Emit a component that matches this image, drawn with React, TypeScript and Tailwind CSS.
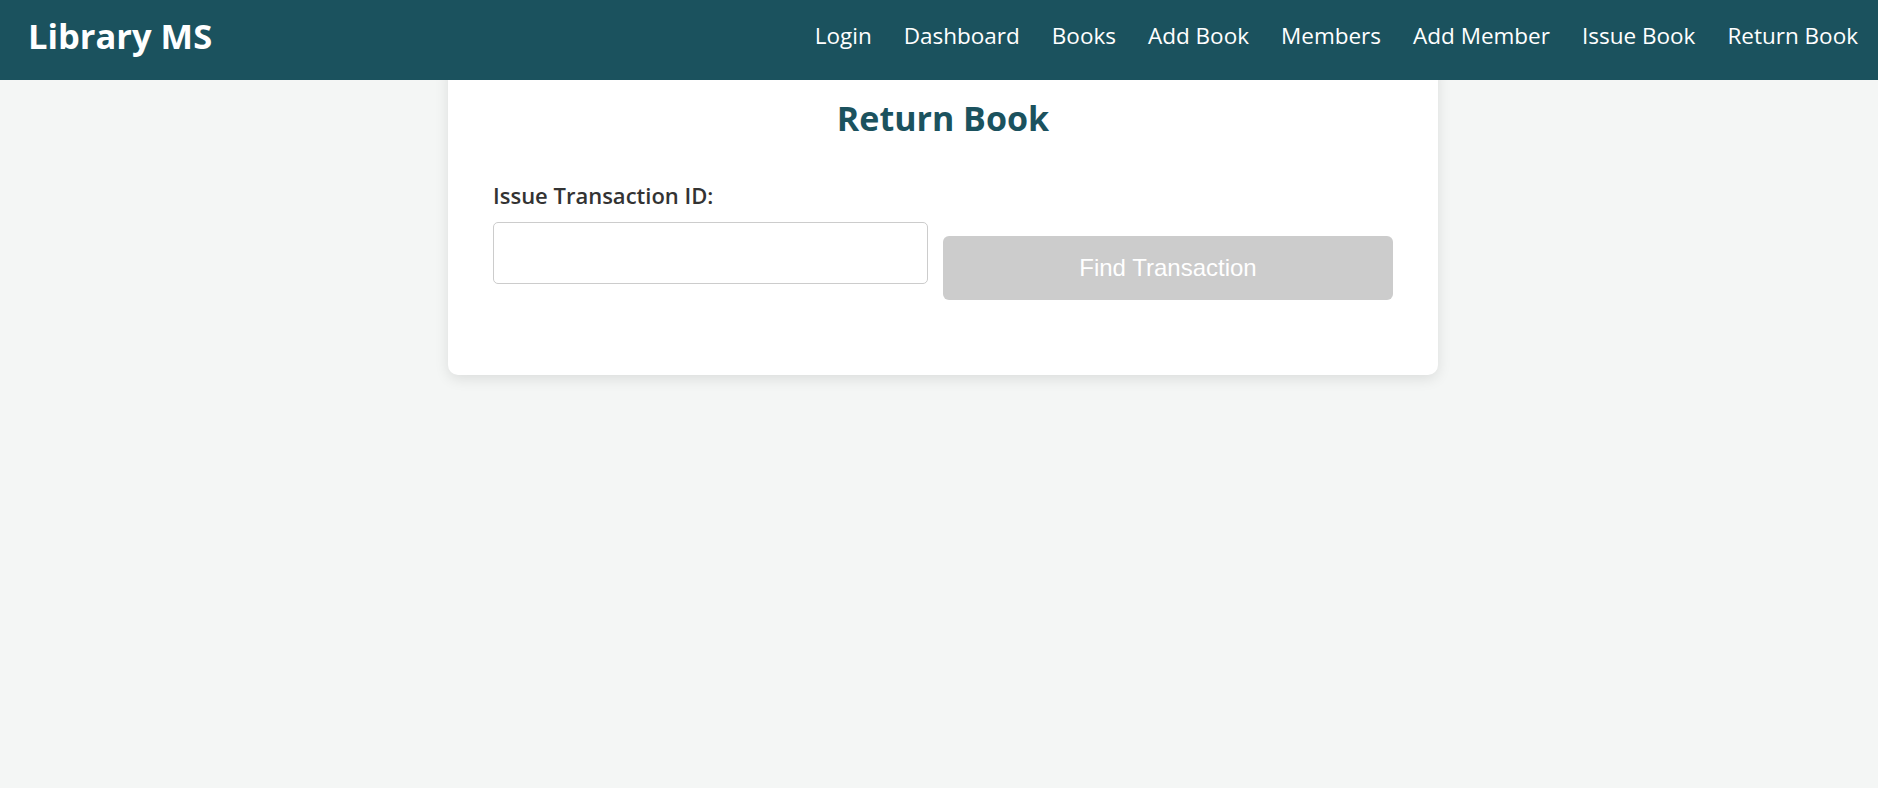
const navLinks = ["Login", "Dashboard", "Books", "Add Book", "Members", "Add Member", "Issue Book", "Return Book"];

export default function App() {
  return (
    <div className="min-h-screen bg-[#f4f6f5] font-['Open_Sans',sans-serif]">
      <header className="relative z-10 flex h-20 items-center justify-between bg-[#1b525e] pb-[8px] pl-7 pr-5">
        <h1 className="text-[34.5px] font-bold text-white">Library MS</h1>
        <nav className="flex gap-8">
          {navLinks.map((link) => (
            <a key={link} href="#" className="text-[22.5px] text-white">
              {link}
            </a>
          ))}
        </nav>
      </header>

      <main className="flex justify-center pl-2">
        <div className="-mt-5 w-[990px] rounded-[10px] bg-white px-[45px] pt-[38px] pb-[75px] shadow-[0_4px_14px_rgba(0,0,0,0.1)]">
          <h2 className="mb-[43px] text-center text-[34px] leading-[40px] font-bold text-[#1b525e]">Return Book</h2>

          <form className="flex items-end gap-[15px]" onSubmit={(e) => e.preventDefault()}>
            <div className="mb-4 flex flex-1 flex-col">
              <label htmlFor="txn" className="mb-[13px] text-[22px] leading-[28px] font-semibold text-[#333]">
                Issue Transaction ID:
              </label>
              <input
                id="txn"
                type="text"
                className="h-[62px] rounded-[5px] border border-[#ccc] bg-white px-3 text-[20px] outline-none"
              />
            </div>
            <button
              type="submit"
              disabled
              className="h-16 w-[450px] rounded-md bg-[#ccc] font-['Liberation_Sans',Arial,sans-serif] text-[24px] text-white"
            >
              Find Transaction
            </button>
          </form>
        </div>
      </main>
    </div>
  );
}
